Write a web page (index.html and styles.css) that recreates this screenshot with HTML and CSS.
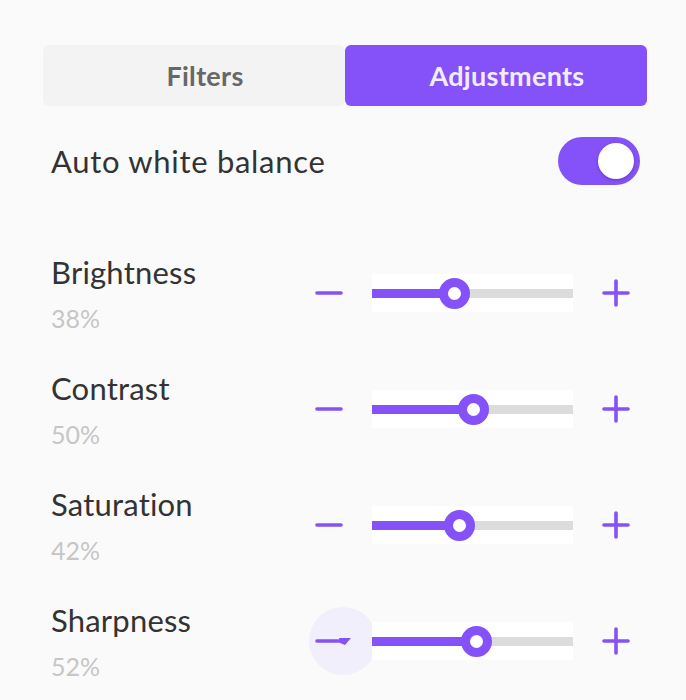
FILE: index.html
```html
<!DOCTYPE html>
<html>
<head>
<meta charset="utf-8">
<link rel="stylesheet" href="styles.css">
</head>
<body>
<div class="panel">
  <div class="tabs">
    <div class="tab">Filters</div>
    <div class="tab active">Adjustments</div>
  </div>

  <div class="toggle-row">
    <span class="toggle-label">Auto white balance</span>
    <div class="switch"><div class="knob"></div></div>
  </div>

  <div class="adj-list">
    <div class="adj-row">
      <div class="adj-text">
        <div class="adj-label">Brightness</div>
        <div class="adj-value">38%</div>
      </div>
      <div class="controls">
        <svg class="icon" viewBox="0 0 28 28"><line x1="2" y1="14" x2="26" y2="14"/></svg>
        <div class="slider" style="--pos: 82px">
          <div class="track"></div><div class="fill"></div><div class="thumb"></div>
        </div>
        <svg class="icon" viewBox="0 0 28 28"><line x1="2" y1="14" x2="26" y2="14"/><line x1="14" y1="2" x2="14" y2="26"/></svg>
      </div>
    </div>

    <div class="adj-row">
      <div class="adj-text">
        <div class="adj-label">Contrast</div>
        <div class="adj-value">50%</div>
      </div>
      <div class="controls">
        <svg class="icon" viewBox="0 0 28 28"><line x1="2" y1="14" x2="26" y2="14"/></svg>
        <div class="slider" style="--pos: 101px">
          <div class="track"></div><div class="fill"></div><div class="thumb"></div>
        </div>
        <svg class="icon" viewBox="0 0 28 28"><line x1="2" y1="14" x2="26" y2="14"/><line x1="14" y1="2" x2="14" y2="26"/></svg>
      </div>
    </div>

    <div class="adj-row">
      <div class="adj-text">
        <div class="adj-label">Saturation</div>
        <div class="adj-value">42%</div>
      </div>
      <div class="controls">
        <svg class="icon" viewBox="0 0 28 28"><line x1="2" y1="14" x2="26" y2="14"/></svg>
        <div class="slider" style="--pos: 87px">
          <div class="track"></div><div class="fill"></div><div class="thumb"></div>
        </div>
        <svg class="icon" viewBox="0 0 28 28"><line x1="2" y1="14" x2="26" y2="14"/><line x1="14" y1="2" x2="14" y2="26"/></svg>
      </div>
    </div>

    <div class="adj-row">
      <div class="adj-text">
        <div class="adj-label">Sharpness</div>
        <div class="adj-value">52%</div>
      </div>
      <div class="controls">
        <div class="minus-wrap">
          <div class="ripple"></div>
          <svg class="icon icon-cursor" viewBox="0 0 40 28"><line x1="2" y1="14" x2="26" y2="14"/><polygon class="pointer" points="24,11 36,11 30,18 25,16"/></svg>
        </div>
        <div class="slider" style="--pos: 104px">
          <div class="track"></div><div class="fill"></div><div class="thumb"></div>
        </div>
        <svg class="icon" viewBox="0 0 28 28"><line x1="2" y1="14" x2="26" y2="14"/><line x1="14" y1="2" x2="14" y2="26"/></svg>
      </div>
    </div>
  </div>
</div>
</body>
</html>
```

FILE: styles.css
```css
* { box-sizing: border-box; }

html, body {
  margin: 0;
  padding: 0;
  background: #fafafa;
  font-family: "Lato", "Noto Sans", sans-serif;
}

.panel {
  padding: 45px 39px 0 43px;
  overflow: hidden;
  height: 700px;
}

.tabs {
  display: flex;
  height: 61px;
}

.tab {
  flex: 1;
  display: flex;
  align-items: center;
  justify-content: center;
  padding-left: 22px;
  background: #f3f3f3;
  border-radius: 6px;
  color: #676767;
  font-weight: 700;
  font-size: 27px;
  letter-spacing: 0.3px;
}

.tab.active {
  background: #8452f8;
  color: #f3ecff;
}

.toggle-row {
  display: flex;
  align-items: center;
  justify-content: space-between;
  margin-top: 31px;
  padding-left: 8px;
  padding-right: 7px;
  height: 48px;
}

.toggle-label {
  font-size: 31px;
  color: #333;
  letter-spacing: 0.7px;
}

.switch {
  width: 82px;
  height: 48px;
  border-radius: 24px;
  background: #8452f8;
  display: flex;
  align-items: center;
  justify-content: flex-end;
  padding-right: 6px;
}

.knob {
  width: 36px;
  height: 36px;
  border-radius: 50%;
  background: #fff;
  box-shadow: 0 1px 3px rgba(40, 10, 90, 0.35);
}

.adj-list {
  margin-top: 50px;
  display: flex;
  flex-direction: column;
}

.adj-row {
  height: 116px;
  display: flex;
  align-items: center;
  padding-left: 8px;
  padding-right: 17px;
}

.adj-text {
  display: flex;
  flex-direction: column;
}

.adj-label {
  font-size: 31px;
  line-height: 36px;
  color: #333;
  letter-spacing: 0.2px;
}

.adj-value {
  font-size: 25px;
  line-height: 30px;
  margin-top: 13px;
  color: #c6c6c6;
}

.controls {
  margin-left: auto;
  display: flex;
  align-items: center;
}

.icon {
  width: 28px;
  height: 28px;
  stroke: #8452f8;
  stroke-width: 3.6;
  stroke-linecap: round;
  fill: none;
  display: block;
}

.minus-wrap {
  position: relative;
  width: 28px;
  height: 28px;
}

.ripple {
  position: absolute;
  width: 68px;
  height: 68px;
  border-radius: 50%;
  background: #f2effc;
  left: -6px;
  top: -20px;
}

.icon-cursor {
  position: relative;
  width: 40px;
}

.icon-cursor .pointer {
  fill: #8452f8;
  stroke: none;
}

.slider {
  position: relative;
  width: 201px;
  height: 38px;
  margin: 0 29px 0 29px;
  background: #fff;
}

.track {
  position: absolute;
  left: 0;
  right: 0;
  top: 15px;
  height: 9px;
  background: #dcdcdc;
}

.fill {
  position: absolute;
  left: 0;
  top: 15px;
  height: 9px;
  width: var(--pos);
  background: #8452f8;
}

.thumb {
  position: absolute;
  top: 4px;
  left: calc(var(--pos) - 15px);
  width: 31px;
  height: 31px;
  border-radius: 50%;
  background: #fff;
  border: 9px solid #8452f8;
}
```
